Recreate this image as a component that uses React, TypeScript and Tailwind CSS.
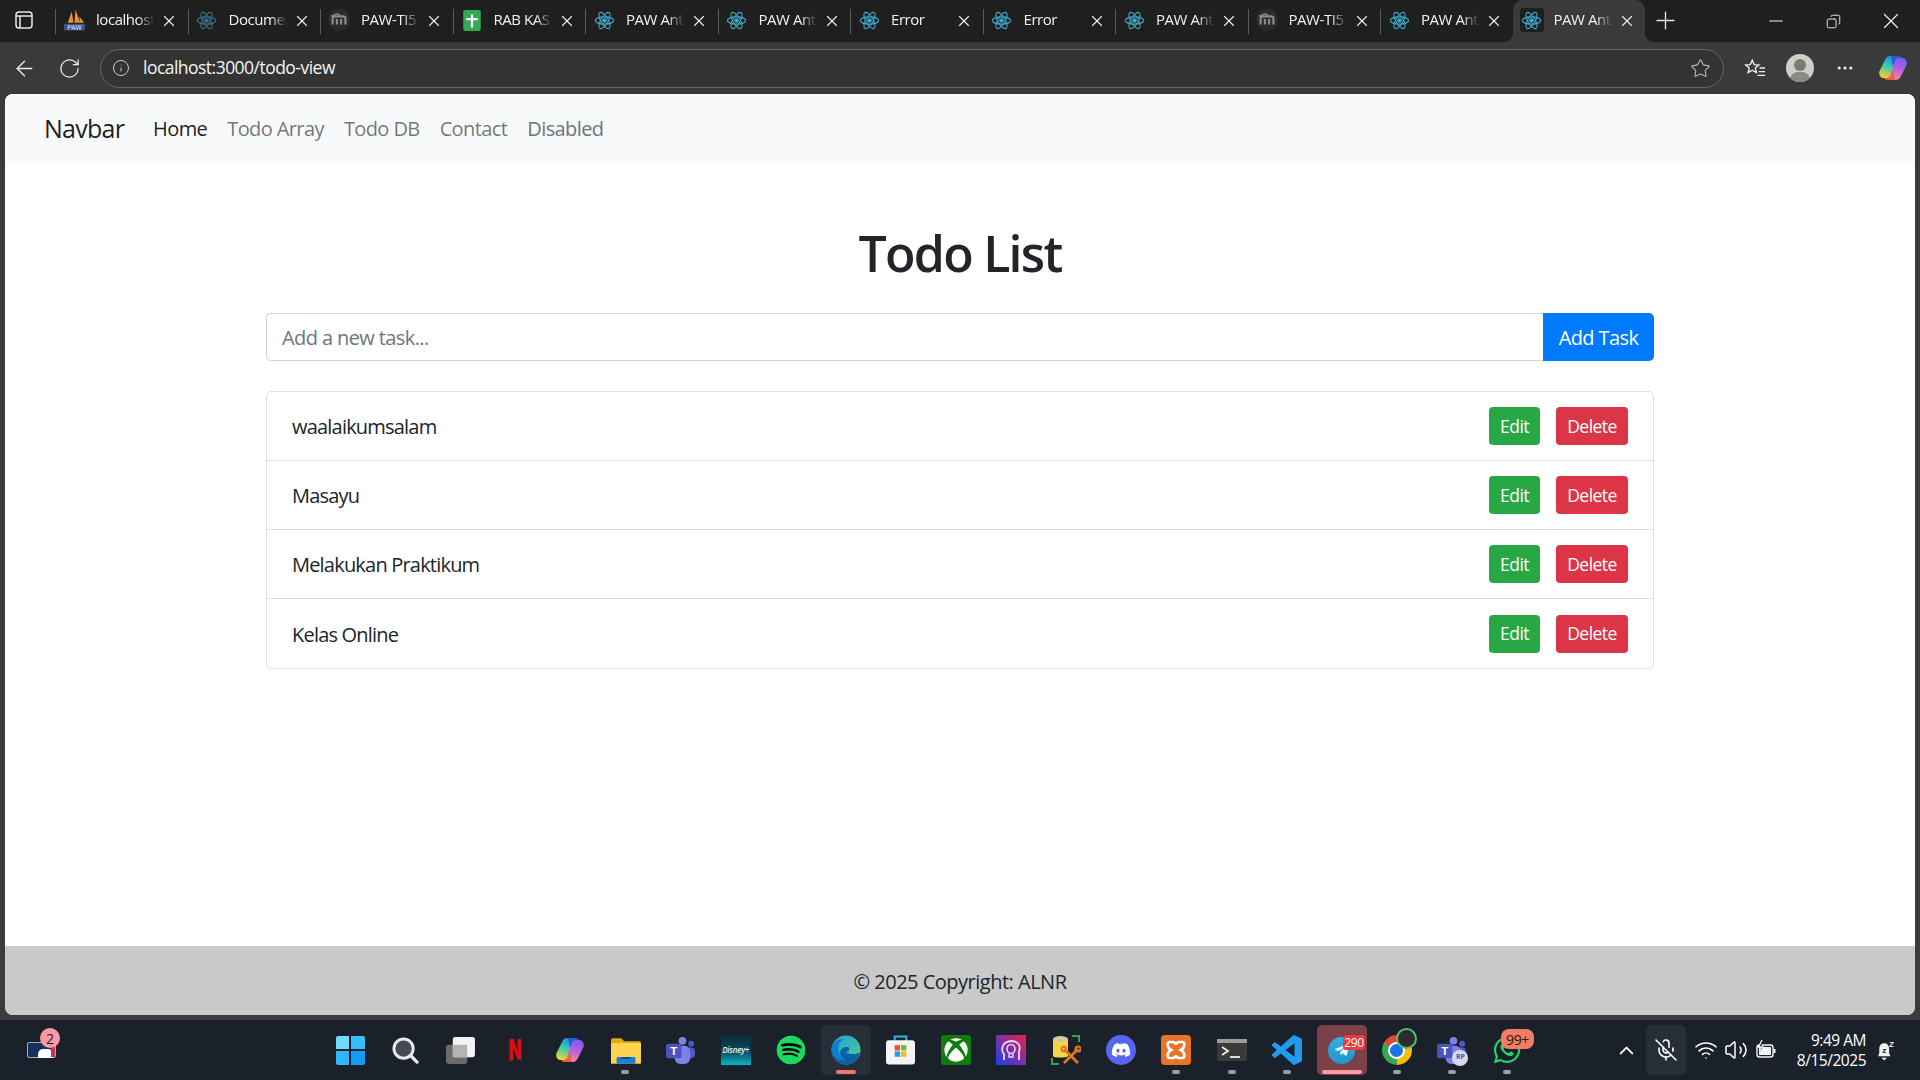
import { ArrowLeft, ChevronUp, Copy, Info, Minus, MicOff, MoreHorizontal, Plus, RotateCw, Star, Volume2, Wifi, X } from 'lucide-react';
import { FaDiscord, FaSpotify, FaTelegramPlane, FaWhatsapp, FaXbox } from 'react-icons/fa';
import type { ReactNode } from 'react';

const ReactIcon = ({ dim = false }: { dim?: boolean }) => (
  <svg viewBox="0 0 24 24" className={`h-[21px] w-[21px] ${dim ? 'text-[#2f7388]' : 'text-[#3fa9c9]'}`} fill="none" stroke="currentColor" strokeWidth="1.3">
    <ellipse cx="12" cy="12" rx="10.5" ry="4.2" />
    <ellipse cx="12" cy="12" rx="10.5" ry="4.2" transform="rotate(60 12 12)" />
    <ellipse cx="12" cy="12" rx="10.5" ry="4.2" transform="rotate(120 12 12)" />
    <circle cx="12" cy="12" r="2" fill="currentColor" />
  </svg>
);

const MoodleIcon = () => (
  <svg viewBox="0 0 24 24" className="h-[22px] w-[22px]">
    <circle cx="12" cy="12" r="12" fill="#2b2b2b" />
    <path d="M5 17v-6.5c0-1.6 1-2.5 2.6-2.5h8.8c1.6 0 2.6.9 2.6 2.5V17M9.7 17v-6M14.3 17v-6" fill="none" stroke="#8a8a8a" strokeWidth="2.4" />
    <path d="M3 8l7-3 3 1.5" fill="none" stroke="#8a8a8a" strokeWidth="1.4" />
  </svg>
);

const SheetIcon = () => (
  <svg viewBox="0 0 20 24" className="h-[21px] w-[20px]">
    <rect width="20" height="24" rx="2" fill="#34a853" />
    <path d="M10 5v15M3.5 10.5h13" stroke="#fff" strokeWidth="2.6" />
  </svg>
);

const PawIcon = () => (
  <svg viewBox="0 0 22 24" className="h-[24px] w-[21px]">
    <path d="M4 15L8 3l2 12zM11 15l1-14 5 14zM17 15l-1-7 5 7z" fill="#e8922e" />
    <rect x="0" y="16" width="22" height="7" fill="#3c4f86" />
    <text x="11" y="22.4" textAnchor="middle" fontSize="7" fontWeight="700" fill="#b7c4e6" fontFamily="Liberation Sans, sans-serif">PAW</text>
  </svg>
);

const tabs: { icon: ReactNode; title: string }[] = [
  { icon: <PawIcon />, title: 'localhost' },
  { icon: <ReactIcon dim />, title: 'Document' },
  { icon: <MoodleIcon />, title: 'PAW-TI5' },
  { icon: <SheetIcon />, title: 'RAB KAS' },
  { icon: <ReactIcon />, title: 'PAW Ant' },
  { icon: <ReactIcon />, title: 'PAW Ant' },
  { icon: <ReactIcon />, title: 'Error' },
  { icon: <ReactIcon />, title: 'Error' },
  { icon: <ReactIcon />, title: 'PAW Ant' },
  { icon: <MoodleIcon />, title: 'PAW-TI5' },
  { icon: <ReactIcon />, title: 'PAW Ant' },
];

const Tab = ({ icon, title }: { icon: ReactNode; title: string }) => (
  <div className="flex h-[42px] w-[132.5px] shrink-0 items-center">
    <div className="h-[25px] w-px shrink-0 bg-[#5d5d5d]" />
    <div className="ml-[6px] flex w-[24px] shrink-0 justify-center pb-[2px]">{icon}</div>
    <span className="ml-[10px] w-[58px] shrink-0 overflow-hidden pb-[3px] whitespace-nowrap text-[15px] tracking-[-0.03em] text-[#f2f2f2] [mask-image:linear-gradient(to_right,black_72%,transparent)]">
      {title}
    </span>
    <X size={18} strokeWidth={1.5} className="ml-[6px] shrink-0 text-[#f0f0f0]" />
  </div>
);

const Sidebar = () => (
  <svg viewBox="0 0 18 18" className="h-[18px] w-[18px]" fill="none" stroke="#e8e8e8" strokeWidth="1.5">
    <rect x="1" y="1" width="16" height="16" rx="3" />
    <path d="M1 5h16M5 5v12" />
  </svg>
);

const CopilotIcon = ({ size, id }: { size: number; id: string }) => (
  <svg viewBox="0 0 28 26" width={size} height={(size * 26) / 28}>
    <defs>
      <linearGradient id={`${id}a`} x1="0.6" y1="0" x2="0.3" y2="1">
        <stop offset="0" stopColor="#1a8cf0" />
        <stop offset="0.5" stopColor="#3fd0a0" />
        <stop offset="1" stopColor="#f5d030" />
      </linearGradient>
      <linearGradient id={`${id}b`} x1="0.6" y1="0" x2="0.3" y2="1">
        <stop offset="0" stopColor="#7a5cf0" />
        <stop offset="0.5" stopColor="#c060e0" />
        <stop offset="1" stopColor="#f08a9a" />
      </linearGradient>
    </defs>
    <path d="M11 1h8L12 20c-.7 2-2 3-4 3H5c-4 0-5.500-4-4.500-7L6 5c1-2.500 3-4 5-4z" fill={`url(#${id}a)`} />
    <path d="M17 25H9l7-19c.7-2 2-3 4-3h3c4 0 5.500 4 4.500 7L22 21c-1 2.500-3 4-5 4z" fill={`url(#${id}b)`} />
    <path d="M12 1h7c2 0 3.500 1 4 2h-3c-2 0-3.300 1-4 3l-2 5z" fill="#1f5fd8" />
    <path d="M16 25H9c-2 0-3.500-1-4-2h3c2 0 3.300-1 4-3l2-5z" fill="#f0603a" />
  </svg>
);

const EdgeIcon = () => (
  <svg viewBox="0 0 32 32" className="h-[30px] w-[30px]">
    <defs>
      <linearGradient id="edgeTop" x1="0" y1="0" x2="1" y2="1">
        <stop offset="0" stopColor="#1aa0e8" />
        <stop offset="1" stopColor="#58d07a" />
      </linearGradient>
    </defs>
    <circle cx="16" cy="16" r="15.500" fill="url(#edgeTop)" />
    <path d="M31 18c-1 8-7 13.500-15 13.500C7 31.500.5 24 .5 15 2 22 8 28 15 27c-4-2-6-6-5-10 1-3 5-5 9-4 1 2 0 5-3 5 3 3 11 3 15 0z" fill="#0c5fa8" />
    <path d="M.5 15C1 8 8 3 14 5 8 6 7 13 9 19c2 5 4 7 6 8-7 1-13-5-14.500-12z" fill="#0f7fd0" />
  </svg>
);

const StoreIcon = () => (
  <svg viewBox="0 0 30 30" className="h-[30px] w-[29px]">
    <path d="M9 6V1h12v5" fill="none" stroke="#26b8f0" strokeWidth="2" />
    <rect y="5" width="30" height="25" rx="3" fill="#f4f4f4" />
    <rect x="9" y="10" width="5.500" height="5.500" fill="#f0512a" />
    <rect x="15.500" y="10" width="5.500" height="5.500" fill="#7fba2a" />
    <rect x="9" y="16.500" width="5.500" height="5.500" fill="#1ba1e8" />
    <rect x="15.500" y="16.500" width="5.500" height="5.500" fill="#fbb81c" />
  </svg>
);

const Windows = () => (
  <div className="grid h-[29px] w-[29px] grid-cols-2 gap-[1.5px]">
    <div className="rounded-tl-[2px] bg-[#6fdcff]" />
    <div className="rounded-tr-[2px] bg-[#38bdfb]" />
    <div className="rounded-bl-[2px] bg-[#2cb8fb]" />
    <div className="rounded-br-[2px] bg-[#149bf5]" />
  </div>
);

const SearchIcon = () => (
  <svg viewBox="0 0 28 28" className="h-[27px] w-[27px]">
    <circle cx="12" cy="12" r="10" fill="#454a55" stroke="#e8e8e8" strokeWidth="3" />
    <path d="M19.500 19.500l6.500 6.500" stroke="#e8e8e8" strokeWidth="3.500" strokeLinecap="round" />
  </svg>
);

const TaskView = () => (
  <svg viewBox="0 0 30 28" className="h-[27px] w-[29px]">
    <rect y="8" width="22" height="20" rx="2.500" fill="#6b6b6b" />
    <rect x="7" y="0" width="23" height="21" rx="2.500" fill="#f4f4f4" />
    <rect x="7" y="8" width="15" height="13" fill="#b4b4b4" />
  </svg>
);

const Netflix = () => (
  <svg viewBox="0 0 14 26" className="h-[22px] w-[13px]">
    <path d="M0 0h4.500l5 14V0H14v25l-4.500-1-5-14v15L0 26z" fill="#d80e14" />
  </svg>
);

const Folder = () => (
  <svg viewBox="0 0 32 28" className="h-[27px] w-[30px]">
    <path d="M0 3a2 2 0 0 1 2-2h9l3 3h16a2 2 0 0 1 2 2v20H0z" fill="#e5a913" />
    <rect y="6" width="32" height="22" rx="1" fill="#fbd452" />
    <rect x="6" y="21" width="20" height="7" rx="1" fill="#1b7fd6" />
    <rect x="11" y="21" width="10" height="2" fill="#0c4f9a" />
  </svg>
);

const TeamsIcon = ({ badge = false }: { badge?: boolean }) => (
  <div className="relative h-[27px] w-[29px]">
    <svg viewBox="0 0 30 28" className="h-[27px] w-[29px]">
      <circle cx="17" cy="4" r="4" fill="#7b83eb" />
      <circle cx="26" cy="7" r="3" fill="#5059c9" />
      <rect x="20" y="11" width="10" height="11" rx="4" fill="#5059c9" />
      <rect x="9" y="9" width="16" height="19" rx="6" fill="#7b83eb" />
      <rect x="0" y="7" width="16" height="15" rx="2" fill="#4b53bc" />
      <text x="8" y="19" textAnchor="middle" fontSize="12" fontWeight="700" fill="#fff" fontFamily="Liberation Sans, sans-serif">T</text>
    </svg>
    {badge && (
      <span className="absolute right-[-2px] bottom-[-2px] flex h-[16px] w-[16px] items-center justify-center rounded-full bg-[#d8d6ea] text-[7px] font-bold text-[#4b53bc]">
        RP
      </span>
    )}
  </div>
);

const Disney = () => (
  <div className="flex h-[30px] w-[30px] items-center justify-center bg-[linear-gradient(#0a2a3a,#0b4a5c_55%,#0bb5c8)]">
    <span className="text-[8px] font-semibold italic leading-none tracking-[-0.03em] text-[#e8f4f8]">Disney+</span>
  </div>
);

const XboxTile = () => (
  <div className="flex h-[30px] w-[30px] items-center justify-center rounded-[3px] bg-[#107c10]">
    <FaXbox size={24} className="text-white" />
  </div>
);

const PhotoMic = () => (
  <svg viewBox="0 0 30 30" className="h-[30px] w-[30px]">
    <defs>
      <linearGradient id="micBg" x1="0" y1="1" x2="1" y2="0">
        <stop offset="0" stopColor="#1540e8" />
        <stop offset="0.55" stopColor="#8a2f9e" />
        <stop offset="1" stopColor="#f0203c" />
      </linearGradient>
    </defs>
    <rect width="30" height="30" fill="url(#micBg)" />
    <path d="M8 25v-6c-3-3-3-12 7-13 8 0 10 6 8 10v9" fill="none" stroke="#e6d8ee" strokeWidth="1.800" />
    <ellipse cx="15" cy="14" rx="4" ry="4.500" fill="none" stroke="#e6d8ee" strokeWidth="1.600" />
    <path d="M13 19v3h4v-3" fill="none" stroke="#e6d8ee" strokeWidth="1.400" />
  </svg>
);

const DbTools = () => (
  <svg viewBox="0 0 30 30" className="h-[30px] w-[30px]">
    <path d="M2 4v17c0 2 15 2 15 0V4z" fill="#f2d648" />
    <ellipse cx="9.500" cy="4" rx="7.500" ry="3" fill="#d8c9a0" />
    <path d="M21 1h7v6M1 23v6h7" fill="none" stroke="#3f9a4a" strokeWidth="2" />
    <path d="M13 28l14-14M27 28L13 14" stroke="#e27a1c" strokeWidth="2.800" />
    <circle cx="27" cy="14" r="2.500" fill="none" stroke="#e27a1c" strokeWidth="2" />
    <circle cx="13" cy="14" r="2.500" fill="none" stroke="#e27a1c" strokeWidth="2" />
  </svg>
);

const DiscordTile = () => (
  <div className="flex h-[30px] w-[30px] items-center justify-center rounded-full bg-[#5865f2]">
    <FaDiscord size={20} className="text-white" />
  </div>
);

const Xampp = () => (
  <svg viewBox="0 0 30 30" className="h-[30px] w-[30px]">
    <rect width="30" height="30" rx="4" fill="#e87427" />
    <path d="M8 7h4c2 0 3 2 3 3 0-1 1-3 3-3h4c2 0 2 6-2 8 4 2 4 8 2 8h-4c-2 0-3-2-3-3 0 1-1 3-3 3H8c-2 0-2-6 2-8-4-2-4-8-2-8z" fill="none" stroke="#fff" strokeWidth="2.600" />
  </svg>
);

const Terminal = () => (
  <svg viewBox="0 0 30 22" className="h-[22px] w-[30px]">
    <rect width="30" height="22" rx="2" fill="#3a3a3a" />
    <rect width="30" height="4" fill="#9c9c9c" />
    <path d="M5 8l6 4-6 4" fill="none" stroke="#f0f0f0" strokeWidth="1.800" />
    <path d="M13 18h10" stroke="#f0f0f0" strokeWidth="1.800" />
  </svg>
);

const VsCode = () => (
  <svg viewBox="0 0 24 24" className="h-[30px] w-[30px]">
    <path
      fill="#1f9cf0"
      d="M23.15 2.587L18.21.21a1.494 1.494 0 0 0-1.705.29l-9.46 8.63-4.12-3.128a.999.999 0 0 0-1.276.057L.327 7.261A1 1 0 0 0 .326 8.74L3.899 12 .326 15.26a1 1 0 0 0 .001 1.479L1.65 17.94a.999.999 0 0 0 1.276.057l4.12-3.128 9.46 8.63a1.492 1.492 0 0 0 1.704.29l4.942-2.377A1.5 1.5 0 0 0 24 20.06V3.939a1.5 1.5 0 0 0-.85-1.352zm-5.146 14.861L10.826 12l7.178-5.448v10.896z"
    />
  </svg>
);

const Telegram = () => (
  <div className="relative flex h-[27px] w-[27px] items-center justify-center rounded-full bg-[linear-gradient(#37aee2,#1e96c8)]">
    <FaTelegramPlane size={16} className="text-white" />
    <span className="absolute top-[-2px] left-[15px] rounded-[3px] bg-[#ec3a3a] px-[1px] text-[12px] leading-[15px] tracking-[-0.03em] text-white">290</span>
  </div>
);

const Chrome = () => (
  <div className="relative flex h-[30px] w-[30px] items-center justify-center rounded-full bg-[conic-gradient(#ea4335_0deg_60deg,#fbbc05_60deg_180deg,#34a853_180deg_300deg,#ea4335_300deg_360deg)]">
    <div className="h-[17px] w-[17px] rounded-full border-2 border-white bg-[#1a73e8]" />
    <div className="absolute top-[-7px] left-[14px] h-[21px] w-[21px] rounded-full border-2 border-[#58b96f] bg-[#2c2c2c]" />
  </div>
);

const WhatsApp = () => (
  <div className="relative">
    <FaWhatsapp size={30} className="text-[#25d366]" />
    <span className="absolute top-[-6px] left-[9px] flex h-[20px] w-[33px] items-center justify-center rounded-[8px] bg-[#f47c64] text-[14px] tracking-[-0.02em] text-[#1a1a1a]">99+</span>
  </div>
);

const taskbarApps: { icon: ReactNode; mark?: 'dot' | 'edge' | 'telegram' }[] = [
  { icon: <Windows /> },
  { icon: <SearchIcon /> },
  { icon: <TaskView /> },
  { icon: <Netflix /> },
  { icon: <CopilotIcon size={28} id="taskbarCopilot" /> },
  { icon: <Folder />, mark: 'dot' },
  { icon: <TeamsIcon /> },
  { icon: <Disney /> },
  { icon: <FaSpotify size={30} className="rounded-full bg-black text-[#1ed760]" /> },
  { icon: <EdgeIcon />, mark: 'edge' },
  { icon: <StoreIcon /> },
  { icon: <XboxTile /> },
  { icon: <PhotoMic /> },
  { icon: <DbTools /> },
  { icon: <DiscordTile /> },
  { icon: <Xampp />, mark: 'dot' },
  { icon: <Terminal />, mark: 'dot' },
  { icon: <VsCode />, mark: 'dot' },
  { icon: <Telegram />, mark: 'telegram' },
  { icon: <Chrome />, mark: 'dot' },
  { icon: <TeamsIcon badge />, mark: 'dot' },
  { icon: <WhatsApp />, mark: 'dot' },
];

const TaskbarApp = ({ icon, mark }: { icon: ReactNode; mark?: 'dot' | 'edge' | 'telegram' }) => (
  <div className="relative flex h-[50px] w-[55.1px] shrink-0 items-center justify-center">
    {mark === 'edge' && <div className="absolute inset-y-0 left-[2.5px] w-[50px] rounded-[5px] bg-[#262e38]" />}
    {mark === 'telegram' && <div className="absolute inset-y-0 left-[2.5px] w-[50px] rounded-[5px] bg-[#7c4048]" />}
    <div className="relative">{icon}</div>
    {mark === 'dot' && <div className="absolute bottom-[1px] left-[23.5px] h-[4px] w-[8px] rounded-full bg-[#9aa0a6]" />}
    {mark === 'edge' && <div className="absolute bottom-[1px] left-[18px] h-[4px] w-[20px] rounded-full bg-[#f0776a]" />}
    {mark === 'telegram' && <div className="absolute bottom-[1px] left-[7.5px] h-[4px] w-[40px] rounded-full bg-[#ff9aa5]" />}
  </div>
);

const todos = ['waalaikumsalam', 'Masayu', 'Melakukan Praktikum', 'Kelas Online'];

const App = () => {
  return (
    <div className="flex h-[1080px] w-[1920px] flex-col overflow-hidden bg-[#3a3a3a] font-['Open_Sans','Noto_Sans',sans-serif] text-[#212529]">
      {/* Tab strip */}
      <div className="flex h-[42px] shrink-0 items-center bg-[#1f1f1f]">
        <div className="flex w-[55px] shrink-0 justify-center pr-[7px] pb-[2px]">
          <Sidebar />
        </div>
        {tabs.map((tab, i) => (
          <Tab key={i} icon={tab.icon} title={tab.title} />
        ))}
        <div className="relative flex h-[42px] w-[132.5px] shrink-0 items-center rounded-t-[10px] bg-[#3a3a3a]">
          <div className="absolute bottom-0 left-[-8px] h-[8px] w-[8px] bg-[radial-gradient(circle_at_0_0,#1f1f1f_7.5px,#3a3a3a_8px)]" />
          <div className="absolute right-[-8px] bottom-0 h-[8px] w-[8px] bg-[radial-gradient(circle_at_100%_0,#1f1f1f_7.5px,#3a3a3a_8px)]" />
          <div className="mb-[2px] ml-[7px] flex h-[24px] w-[24px] shrink-0 items-center justify-center rounded-[3px] bg-[#1f1f1f]">
            <ReactIcon />
          </div>
          <span className="ml-[10px] w-[58px] shrink-0 overflow-hidden pb-[3px] whitespace-nowrap text-[15px] tracking-[-0.03em] text-[#f2f2f2] [mask-image:linear-gradient(to_right,black_72%,transparent)]">
            PAW Ant
          </span>
          <X size={18} strokeWidth={1.5} className="ml-[6px] shrink-0 text-[#f0f0f0]" />
        </div>
        <Plus size={29} strokeWidth={1.1} className="mb-[2px] ml-[6px] text-[#e8e8e8]" />
        <div className="ml-auto flex items-center">
          <Minus size={22} strokeWidth={1.2} className="mr-[39px] text-[#f0f0f0]" />
          <Copy size={15} strokeWidth={1.5} className="mr-[37px] -scale-x-100 text-[#f0f0f0]" />
          <X size={26} strokeWidth={1.1} className="mr-[16px] text-[#f0f0f0]" />
        </div>
      </div>

      {/* Toolbar */}
      <div className="flex h-[52px] shrink-0 items-center">
        <ArrowLeft size={25} strokeWidth={1.3} className="ml-[12px] text-[#ececec]" />
        <RotateCw size={23} strokeWidth={1.3} className="ml-[21px] text-[#ececec]" />
        <div className="ml-[19px] flex h-[39px] w-[1624px] items-center rounded-full border border-[#666] bg-[#333333] pr-[12px] pl-[11px]">
          <Info size={18} strokeWidth={1.3} className="text-[#cfcfcf]" />
          <span className="ml-[13px] pb-[2px] text-[17.5px] tracking-[-0.03em] text-[#f4f4f4]">localhost:3000/todo-view</span>
          <Star size={21} strokeWidth={1.2} className="ml-auto text-[#bdbdbd]" />
        </div>
        <svg viewBox="0 0 24 24" className="ml-[20px] h-[22px] w-[22px]" fill="none" stroke="#f0f0f0" strokeWidth="1.5">
          <path d="M9 3.500l2.100 4.800 5.100.5-3.900 3.300 1.200 5-4.500-2.700-4.500 2.700 1.200-5L1.800 8.800l5.100-.5z" />
          <path d="M17 12h6M16 16h7M15 20h8" />
        </svg>
        <div className="relative ml-[20px] h-[28px] w-[28px] overflow-hidden rounded-full bg-[#cfcdc8]">
          <div className="absolute top-[5px] left-[8px] h-[12px] w-[12px] rounded-full bg-[#7b7a76]" />
          <div className="absolute top-[18px] left-[4px] h-[16px] w-[20px] rounded-full bg-[#8b8a86]" />
        </div>
        <MoreHorizontal size={20} strokeWidth={1.8} className="ml-[21px] text-[#ececec]" />
        <div className="ml-[24px]">
          <CopilotIcon size={28} id="toolbarCopilot" />
        </div>
      </div>

      {/* Page */}
      <div className="mx-[5px] flex min-h-0 flex-1 flex-col overflow-hidden rounded-[8px] bg-white">
        <nav className="flex h-[69px] shrink-0 items-center bg-[#f8f9fa] pl-[39px]">
          <span className="text-[25px] tracking-[-0.03em] text-black/90">Navbar</span>
          <div className="ml-[29px] flex gap-[20px] text-[20px] tracking-[-0.03em]">
            <span className="text-black/90">Home</span>
            <span className="text-black/55">Todo Array</span>
            <span className="text-black/55">Todo DB</span>
            <span className="text-black/55">Contact</span>
            <span className="text-[#6c757d]">Disabled</span>
          </div>
        </nav>

        <main className="flex flex-1 flex-col">
          <div className="mx-auto mt-[60px] w-[1388px]">
            <h1 className="text-center text-[50px] leading-[60px] font-semibold tracking-[-0.035em]">Todo List</h1>
            <div className="mt-[30px] flex h-[48px]">
              <input
                placeholder="Add a new task..."
                className="min-w-0 flex-1 rounded-l-[5px] border border-r-0 border-[#ced4da] bg-white px-[15px] pt-[2px] text-[20px] tracking-[-0.03em] outline-none placeholder:text-[#6c757d]"
              />
              <button className="w-[111px] rounded-r-[5px] bg-[#007bff] pt-[2px] text-[20px] tracking-[-0.03em] text-white">Add Task</button>
            </div>
            <ul className="mt-[30px] overflow-hidden rounded-[5px] border border-[#dfdfdf]">
              {todos.map((todo) => (
                <li key={todo} className="flex h-[69px] items-center justify-between border-b border-[#dfdfdf] px-[25px] last:border-b-0">
                  <span className="pt-[2px] text-[20px] tracking-[-0.04em]">{todo}</span>
                  <div className="flex gap-[16px]">
                    <button className="h-[38px] w-[51px] rounded-[4px] bg-[#28a745] text-[17.5px] tracking-[-0.03em] text-white">Edit</button>
                    <button className="h-[38px] w-[72px] rounded-[4px] bg-[#dc3545] text-[17.5px] tracking-[-0.03em] text-white">Delete</button>
                  </div>
                </li>
              ))}
            </ul>
          </div>
        </main>

        <footer className="flex h-[69px] shrink-0 items-center justify-center bg-[#c9c9c9] pt-[3px] text-[20px] tracking-[-0.025em]">
          © 2025 Copyright: ALNR
        </footer>
      </div>
      <div className="h-[5px] shrink-0" />

      {/* Taskbar */}
      <div className="flex h-[60px] shrink-0 items-center bg-[#1a212a] text-white">
        <div className="relative ml-[27px] h-[16px] w-[29px] rounded-[2px] border border-[#aab0ba] bg-[#14305e]">
          <div className="absolute top-[6px] left-[10px] h-[9px] w-[15px] rounded-t-[5px] bg-white" />
          <div className="absolute top-0 right-0 h-[14px] w-[4px] bg-[#c8324a]" />
          <span className="absolute top-[-15px] left-[12px] flex h-[20px] w-[20px] items-center justify-center rounded-full bg-[#ff9aa5] text-[14px] text-[#1a1a1a]">2</span>
        </div>
        <div className="ml-[266.5px] flex">
          {taskbarApps.map((app, i) => (
            <TaskbarApp key={i} icon={app.icon} mark={app.mark} />
          ))}
        </div>
        <ChevronUp size={23} strokeWidth={2} className="ml-[80px] text-white" />
        <div className="ml-[8.5px] flex h-[50px] w-[40px] items-center justify-center rounded-[5px] bg-[#262e38]">
          <MicOff size={24} strokeWidth={1.6} />
        </div>
        <Wifi size={24} strokeWidth={1.6} className="ml-[8px]" />
        <Volume2 size={24} strokeWidth={1.5} className="ml-[6px]" />
        <svg viewBox="0 0 22 22" className="ml-[7px] h-[22px] w-[22px]" fill="none" stroke="#f4f4f4" strokeWidth="1.4">
          <rect x="2" y="6" width="16" height="12" rx="2.500" />
          <path d="M19.500 10v4" strokeWidth="2" />
          <path d="M4 8h12v8H4z" fill="#f4f4f4" stroke="none" />
          <path d="M7 1L3.500 8H8l-2.500 6" stroke="#f4f4f4" fill="#1a212a" strokeWidth="1.300" />
        </svg>
        <div className="ml-[13px] w-[76px] text-right text-[15.5px] leading-[20px] tracking-[-0.03em]">
          <div>9:49 AM</div>
          <div>8/15/2025</div>
        </div>
        <svg viewBox="0 0 20 24" className="ml-[11px] h-[23px] w-[18px]" fill="#f0f0f0">
          <path d="M8 4C4 4 2.500 7 2.500 11v4L1 18.500h14L13.500 15v-4C13.500 7 12 4 8 4zM5 20h6l-3 3z" />
          <text x="8" y="15" textAnchor="middle" fontSize="9" fontWeight="700" fill="#1a212a" fontFamily="Liberation Sans, sans-serif">z</text>
          <text x="16" y="8" textAnchor="middle" fontSize="9" fontWeight="700" fill="#f0f0f0" fontFamily="Liberation Sans, sans-serif">Z</text>
        </svg>
      </div>
    </div>
  );
};

export default App;
